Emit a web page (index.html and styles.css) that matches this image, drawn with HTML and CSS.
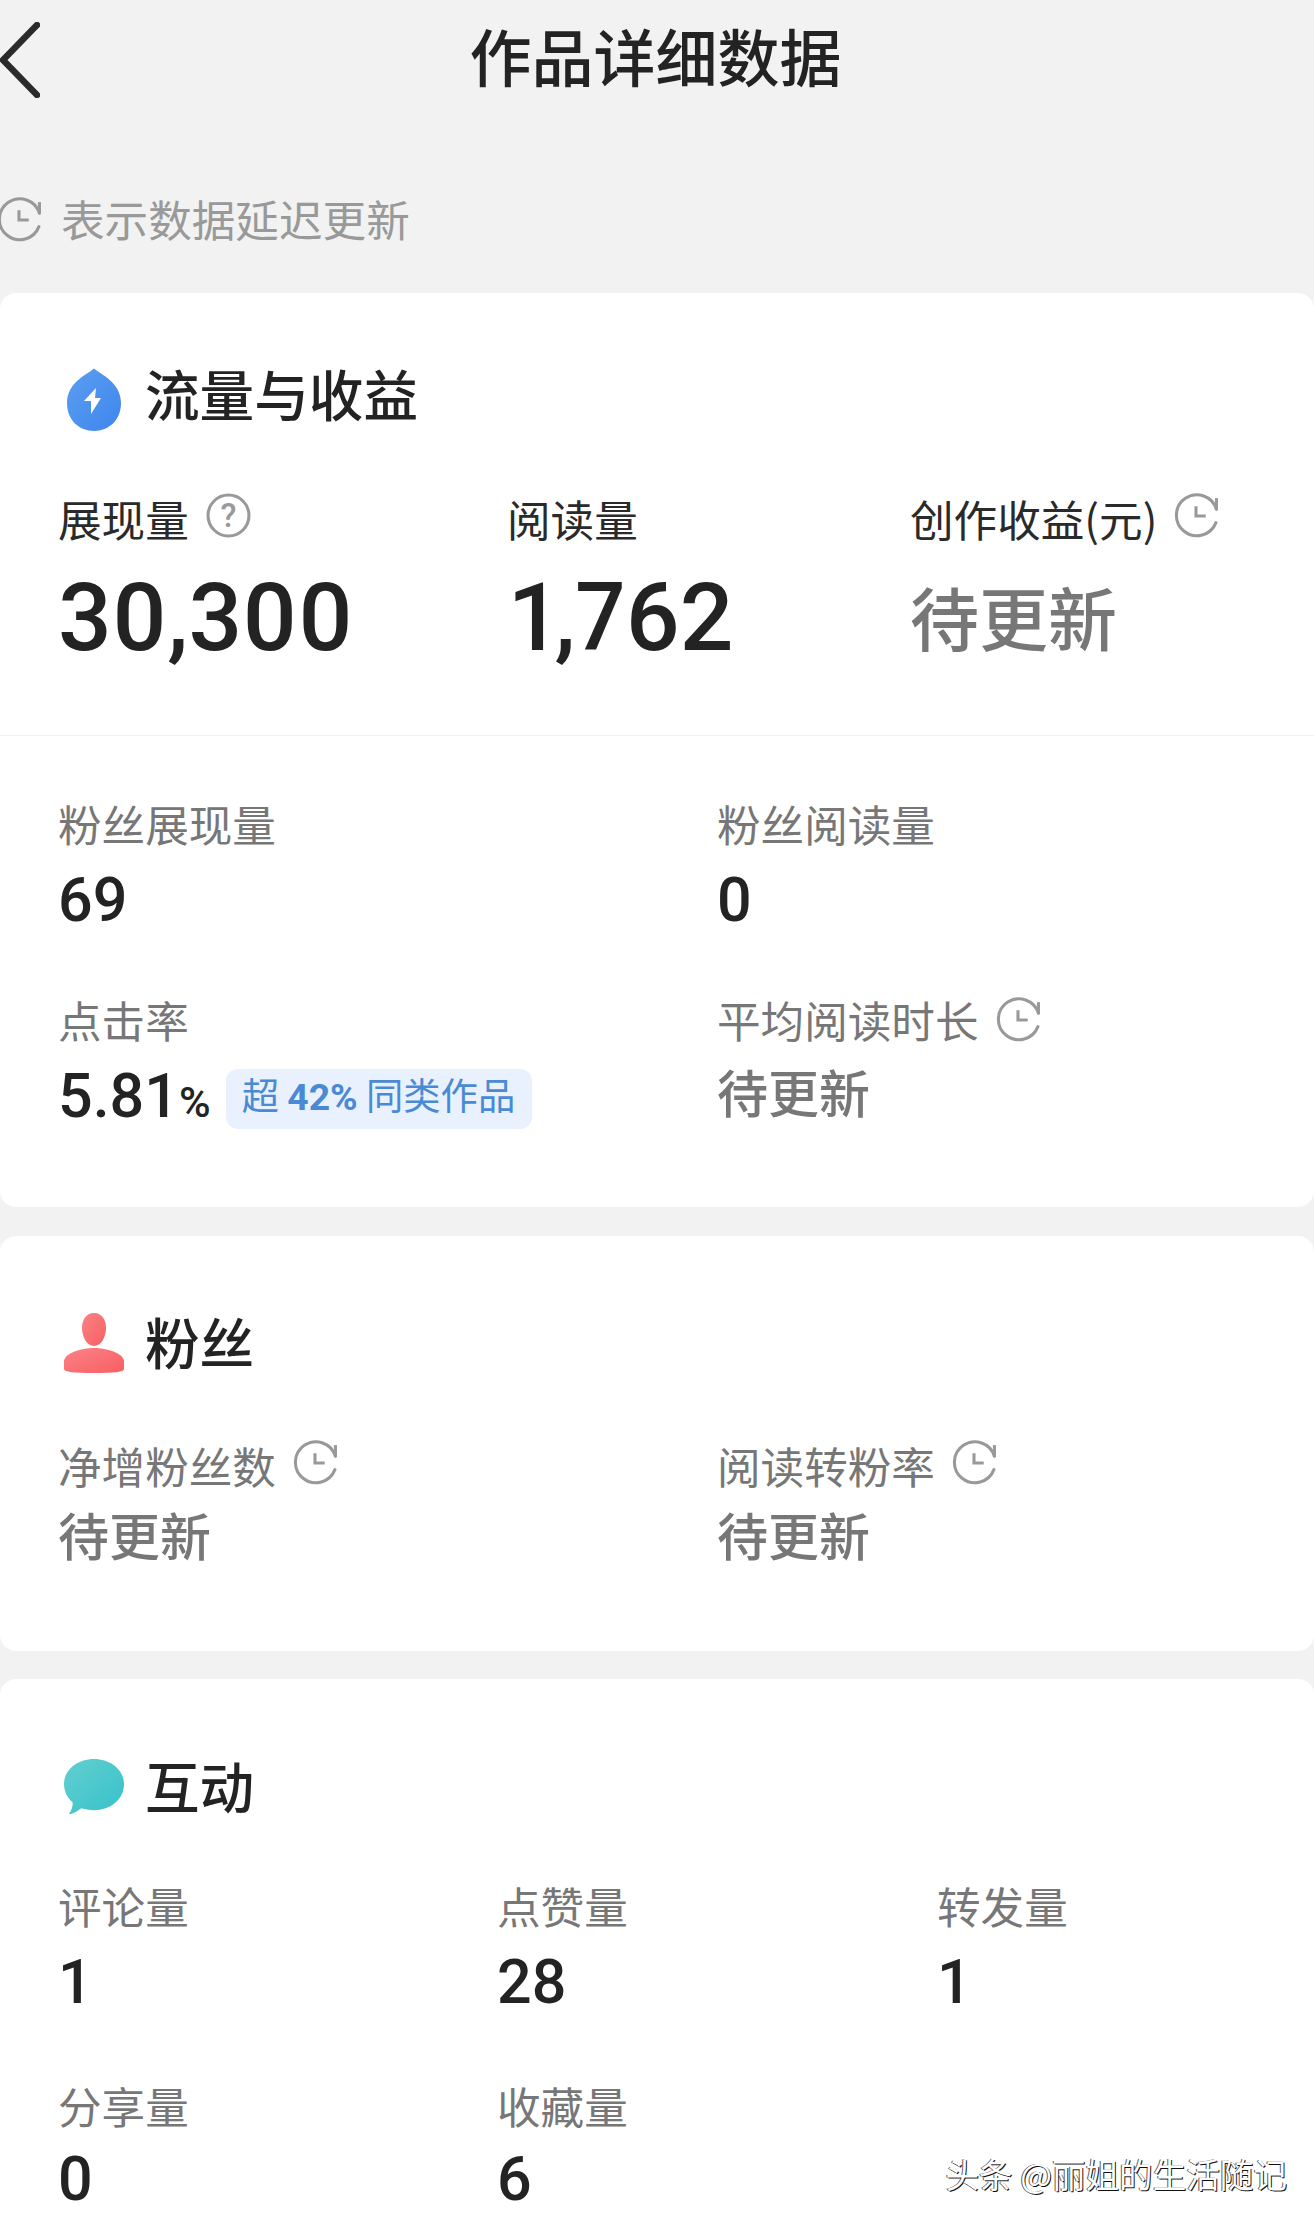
FILE: index.html
```html
<!DOCTYPE html>
<html lang="zh-CN">
<head>
  <meta charset="UTF-8">
  <title>作品详细数据</title>
  <link rel="stylesheet" href="styles.css">
</head>
<body>
  <svg class="defs" width="0" height="0">
    <defs>
      <symbol id="clock" viewBox="0 0 44 44">
        <path d="M41.5 16A20 20 0 1 0 41 29" fill="none" stroke="currentColor" stroke-width="3" stroke-linecap="round"/>
        <path d="M41.5 5V16.5" fill="none" stroke="currentColor" stroke-width="3"/>
        <path d="M21.5 13V22.5H31" fill="none" stroke="currentColor" stroke-width="3"/>
      </symbol>
    </defs>
  </svg>

  <header class="topbar">
    <svg class="back" viewBox="0 0 40 76"><path d="M37 3L3 38L37 73" fill="none" stroke="#2b2b2b" stroke-width="6.5" stroke-linecap="round" stroke-linejoin="round"/></svg>
    <h1>作品详细数据</h1>
  </header>

  <div class="note">
    <svg class="clock note-clock"><use href="#clock"/></svg>
    <span>表示数据延迟更新</span>
  </div>

  <section class="card card-flow">
    <h2 class="card-head">
      <svg class="head-icon drop-icon" viewBox="0 0 56 64">
        <defs><linearGradient id="dropFill" x1="0" y1="0" x2="1" y2="1"><stop offset="0" stop-color="#5b9ef0"/><stop offset="1" stop-color="#3f86ee"/></linearGradient></defs>
        <path d="M28 .5C34 6 55 14 55 35C55 52 43 63 28 63C13 63 1 52 1 35C1 14 22 6 28 .5Z" fill="url(#dropFill)"/>
        <path d="M30 20L18 33H25V46L35 30H29Z" fill="#fff"/>
      </svg>
      <span class="head-title">流量与收益</span>
    </h2>

    <div class="top-stats">
      <div class="metric">
        <div class="label label-dark">展现量
          <svg class="help" viewBox="0 0 44 44">
            <circle cx="22" cy="22" r="20" fill="none" stroke="#999" stroke-width="3"/>
            <text x="22" y="33" text-anchor="middle" class="help-mark">?</text>
          </svg>
        </div>
        <div class="big-number">30,300</div>
      </div>
      <div class="metric">
        <div class="label label-dark">阅读量</div>
        <div class="big-number big-number-inset">1,762</div>
      </div>
      <div class="metric">
        <div class="label label-dark">创作收益(元) <svg class="clock"><use href="#clock"/></svg></div>
        <div class="big-pending">待更新</div>
      </div>
    </div>

    <div class="divider"></div>

    <div class="grid-two grid-fans">
      <div class="metric">
        <div class="label">粉丝展现量</div>
        <div class="value">69</div>
      </div>
      <div class="metric">
        <div class="label">粉丝阅读量</div>
        <div class="value">0</div>
      </div>
      <div class="metric">
        <div class="label">点击率</div>
        <div class="value">5.81<span class="pct">%</span><span class="badge">超 <b>42%</b> 同类作品</span></div>
      </div>
      <div class="metric">
        <div class="label">平均阅读时长 <svg class="clock clock-level"><use href="#clock"/></svg></div>
        <div class="value pending">待更新</div>
      </div>
    </div>
  </section>

  <section class="card card-fans">
    <h2 class="card-head">
      <svg class="head-icon" viewBox="0 0 60 60">
        <defs><linearGradient id="userFill" x1="0" y1="0" x2="1" y2="1"><stop offset="0" stop-color="#fb8285"/><stop offset="1" stop-color="#f75f63"/></linearGradient></defs>
        <path d="M30 0C38 0 42 7 42 15C42 24 37 33 30 33C23 33 18 24 18 15C18 7 22 0 30 0Z" fill="url(#userFill)"/>
        <path d="M30 35C43 35 59 40 60 48V56C60 59 50 60 30 60C10 60 0 59 0 56V48C1 40 17 35 30 35Z" fill="url(#userFill)"/>
      </svg>
      <span class="head-title">粉丝</span>
    </h2>
    <div class="grid-two grid-net">
      <div class="metric">
        <div class="label">净增粉丝数 <svg class="clock"><use href="#clock"/></svg></div>
        <div class="value pending tight">待更新</div>
      </div>
      <div class="metric">
        <div class="label">阅读转粉率 <svg class="clock"><use href="#clock"/></svg></div>
        <div class="value pending tight">待更新</div>
      </div>
    </div>
  </section>

  <section class="card card-talk">
    <h2 class="card-head">
      <svg class="head-icon" viewBox="0 0 62 58">
        <defs><linearGradient id="talkFill" x1="0" y1="0" x2="1" y2="1"><stop offset="0" stop-color="#63cfd0"/><stop offset="1" stop-color="#36c2c9"/></linearGradient></defs>
        <path d="M31 0C48 0 62 11 62 26C62 42 48 53 31 53C26 53 22 52 18 51C15 53 10 57 5 57C8 53 9 49 9 45C3 40 0 33 0 26C0 11 14 0 31 0Z" fill="url(#talkFill)"/>
      </svg>
      <span class="head-title">互动</span>
    </h2>
    <div class="grid-three">
      <div class="metric">
        <div class="label">评论量</div>
        <div class="value">1</div>
      </div>
      <div class="metric">
        <div class="label">点赞量</div>
        <div class="value">28</div>
      </div>
      <div class="metric">
        <div class="label">转发量</div>
        <div class="value">1</div>
      </div>
      <div class="metric">
        <div class="label">分享量</div>
        <div class="value tight">0</div>
      </div>
      <div class="metric">
        <div class="label">收藏量</div>
        <div class="value tight">6</div>
      </div>
    </div>
  </section>

  <div class="watermark">头条 @丽姐的生活随记</div>
</body>
</html>
```

FILE: styles.css
```css
html, body {
  margin: 0;
  padding: 0;
}
body {
  position: relative;
  height: 2223px;
  overflow: hidden;
  background: #f2f2f2;
  color: #232323;
  font-family: "Noto Sans CJK SC", "Liberation Sans", sans-serif;
}
.defs {
  position: absolute;
}

.topbar {
  display: grid;
  grid-template-columns: 1fr auto 1fr;
  align-items: center;
  height: 116px;
}
.back {
  width: 40px;
  height: 76px;
  margin-top: 4px;
}
.topbar h1 {
  margin: -6px 3px 0 0;
  font-size: 62px;
  font-weight: 500;
  line-height: 116px;
}

.note {
  display: flex;
  align-items: center;
  gap: 19px;
  height: 60px;
  margin: 72px 0 45px;
  color: #999;
  font-size: 43.6px;
}
.clock {
  flex: none;
  width: 45px;
  height: 45px;
  margin: -5px 0 0 17px;
  color: #999;
}
.clock-level {
  margin-top: 0;
}
.note-clock {
  margin: 2px 0 0 -3px;
}

.card {
  background: #fff;
  border-radius: 16px;
}
.card-flow {
  padding: 70px 0 68px;
}
.card-fans {
  margin-top: 29px;
  padding: 75px 0 80px;
}
.card-talk {
  margin-top: 28px;
  padding: 76px 0 80px;
}

.card-head {
  display: flex;
  align-items: center;
  gap: 21px;
  height: 64px;
  margin: 0;
  padding-left: 64px;
  font-size: 54.6px;
  font-weight: 500;
  line-height: 64px;
}
.head-title {
  margin-top: -5px;
}
.head-icon {
  flex: none;
  width: 60px;
  height: 62px;
}
.drop-icon {
  height: 64px;
  margin-top: 10px;
}

.top-stats {
  display: grid;
  grid-template-columns: 449px 403px auto;
  margin-top: 63px;
  padding-left: 58px;
}
.divider {
  height: 1px;
  margin-top: 67px;
  background: #f2f2f2;
}
.grid-two {
  display: grid;
  grid-template-columns: 659px 1fr;
  row-gap: 54px;
  padding-left: 58px;
}
.grid-fans {
  margin-top: 59px;
}
.grid-net {
  margin-top: 62px;
}
.grid-three {
  display: grid;
  grid-template-columns: 439px 440px 1fr;
  row-gap: 58px;
  margin-top: 58px;
  padding-left: 58px;
}

.label {
  display: flex;
  align-items: center;
  height: 56px;
  color: #777;
  font-size: 43.6px;
  line-height: 56px;
  white-space: nowrap;
}
.label-dark {
  color: #2a2a2a;
}
.help {
  flex: none;
  width: 45px;
  height: 45px;
  margin: -6px 0 0 17px;
}
.help-mark {
  fill: #999;
  font-family: "Roboto", sans-serif;
  font-size: 32px;
  font-weight: 500;
}

.big-number {
  margin-top: 22px;
  font-family: "Roboto", "Noto Sans CJK SC", sans-serif;
  font-size: 94.5px;
  font-variant-numeric: proportional-nums;
  font-weight: 500;
  line-height: 100px;
}
.big-number-inset {
  padding-left: 4px;
}
.big-pending {
  margin-top: 20px;
  color: #777;
  font-size: 69px;
  font-weight: 500;
  line-height: 100px;
}

.value {
  display: flex;
  align-items: baseline;
  margin-top: 12px;
  font-family: "Roboto", "Noto Sans CJK SC", sans-serif;
  font-size: 61px;
  font-weight: 500;
  line-height: 74px;
}
.value.tight {
  margin-top: 9px;
}
.pending {
  color: #777;
  font-family: "Noto Sans CJK SC", sans-serif;
  font-size: 51px;
  font-weight: 500;
}
.value.pending {
  height: 74px;
  margin-top: 7px;
}
.value.pending.tight {
  margin-top: 4px;
}
.pct {
  font-size: 43px;
}
.badge {
  align-self: center;
  height: 60px;
  margin: 0 0 0 15px;
  padding: 0 17px 0 16px;
  border-radius: 12px;
  background: #e8f1fd;
  color: #4a8ad4;
  font-family: "Noto Sans CJK SC", sans-serif;
  font-size: 37.3px;
  font-weight: 400;
  line-height: 50px;
}
.badge b {
  font-family: "Roboto", sans-serif;
  font-weight: 700;
}

.watermark {
  position: absolute;
  right: 27px;
  top: 2150px;
  color: #fff;
  font-size: 33.6px;
  line-height: 48px;
  text-shadow: 1px 1px 0 #111, -1px 0 0 #555;
  white-space: nowrap;
}
```
